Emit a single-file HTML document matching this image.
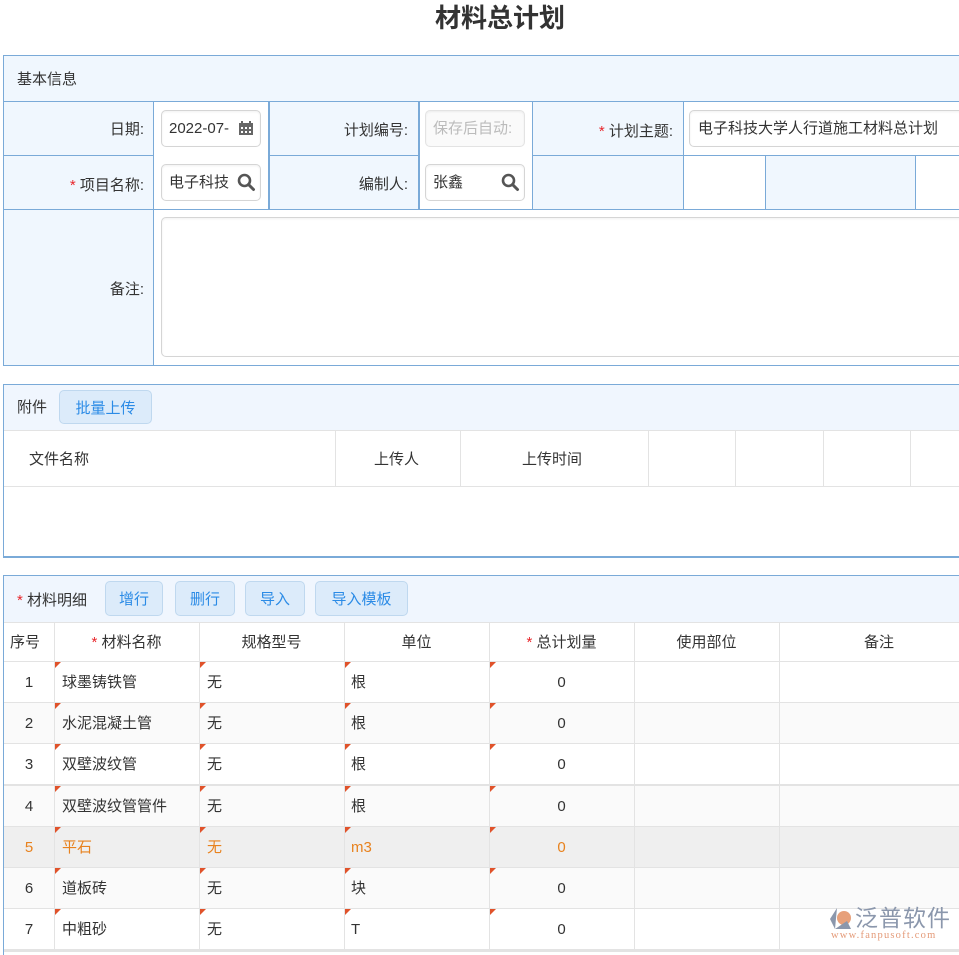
<!DOCTYPE html>
<html><head><meta charset="utf-8"><style>
*{box-sizing:border-box;margin:0;padding:0}
body{width:959px;height:952px;overflow:hidden;background:#fff;position:relative;font-family:"Liberation Sans","Noto Sans CJK SC",sans-serif;font-size:15px;color:#333}
.a{position:absolute}
.lb{position:absolute;background:#f0f7fe}
.vl{position:absolute;width:1px;background:#7aaad8}
.hl{position:absolute;height:1px;background:#7aaad8}
.t{position:absolute;white-space:nowrap;line-height:20px}
.r{text-align:right}
.star{color:#e8262b}
.inp{position:absolute;border:1px solid #d5d5d5;border-radius:5px;background:#fff;box-shadow:inset 0 1px 2px rgba(0,0,0,.06)}
.btn{position:absolute;background:#dcebfa;border:1px solid #bfd8ef;border-radius:5px;color:#2b8be6;text-align:center;line-height:35px;font-size:15px}
.gl{position:absolute;background:#e3e3e3}
.tri{position:absolute;width:0;height:0;border-top:6px solid #e0522a;border-right:6px solid transparent}
.rw .t{top:11px}
</style></head><body>
<div class="t" style="left:0;width:1000px;text-align:center;top:3px;font-size:26px;line-height:30px;font-weight:bold;color:#333">材料总计划</div>

<div class="lb" style="left:3px;top:55px;width:956px;height:310px"></div>
<div class="a" style="left:3px;top:55px;width:957px;height:311px;border:1px solid #7aaad8;border-right:none"></div>
<div class="t" style="left:17px;top:70px">基本信息</div>
<div class="hl" style="left:3px;top:101px;width:956px"></div>
<div class="hl" style="left:3px;top:155px;width:956px"></div>
<div class="hl" style="left:3px;top:209px;width:956px"></div>
<div class="a" style="left:154px;top:102px;width:114px;height:107px;background:#fff"></div>
<div class="a" style="left:419px;top:102px;width:113px;height:107px;background:#fff"></div>
<div class="a" style="left:684px;top:102px;width:275px;height:53px;background:#fff"></div>
<div class="a" style="left:684px;top:156px;width:81px;height:53px;background:#fff"></div>
<div class="a" style="left:916px;top:156px;width:43px;height:53px;background:#fff"></div>
<div class="a" style="left:154px;top:210px;width:805px;height:155px;background:#fff"></div>
<div class="vl" style="left:153px;top:101px;height:264px"></div>
<div class="vl" style="left:268px;top:101px;height:108px;width:2px"></div>
<div class="vl" style="left:418px;top:101px;height:108px;width:2px"></div>
<div class="vl" style="left:532px;top:101px;height:108px"></div>
<div class="vl" style="left:683px;top:101px;height:108px"></div>
<div class="vl" style="left:765px;top:155px;height:54px"></div>
<div class="vl" style="left:915px;top:155px;height:54px"></div>

<div class="t r" style="left:20px;width:124px;top:120px">日期:</div>
<div class="inp" style="left:161px;top:110px;width:100px;height:37px"></div>
<div class="t" style="left:169px;top:119px">2022-07-</div>
<svg class="a" style="left:238px;top:120px" width="16" height="16" viewBox="0 0 16 16"><rect x="1" y="3" width="14" height="12" fill="#666"/><rect x="3" y="1" width="2" height="4" fill="#666"/><rect x="11" y="1" width="2" height="4" fill="#666"/><g fill="#fff"><rect x="3" y="7" width="2" height="2"/><rect x="7" y="7" width="2" height="2"/><rect x="11" y="7" width="2" height="2"/><rect x="3" y="11" width="2" height="2"/><rect x="7" y="11" width="2" height="2"/><rect x="11" y="11" width="2" height="2"/></g></svg>
<div class="t r" style="left:280px;width:128px;top:121px">计划编号:</div>
<div class="inp" style="left:425px;top:110px;width:100px;height:37px;background:#fafafa;border-color:#e3e3e3"></div>
<div class="t" style="left:433px;top:119px;color:#bbb;width:88px;overflow:hidden">保存后自动:</div>
<div class="t r" style="left:540px;width:133px;top:122px"><span class="star">*</span> 计划主题:</div>
<div class="inp" style="left:689px;top:110px;width:280px;height:37px"></div>
<div class="t" style="left:698px;top:119px">电子科技大学人行道施工材料总计划</div>

<div class="t r" style="left:20px;width:124px;top:176px"><span class="star">*</span> 项目名称:</div>
<div class="inp" style="left:161px;top:164px;width:100px;height:37px"></div>
<div class="t" style="left:169px;top:173px">电子科技</div>
<svg class="a" style="left:237px;top:173px" width="19" height="19" viewBox="0 0 19 19"><circle cx="7.5" cy="7.5" r="5.5" fill="none" stroke="#555" stroke-width="2.6"/><line x1="11.5" y1="11.5" x2="16.5" y2="16.5" stroke="#555" stroke-width="3" stroke-linecap="round"/></svg>
<div class="t r" style="left:280px;width:128px;top:175px">编制人:</div>
<div class="inp" style="left:425px;top:164px;width:100px;height:37px"></div>
<div class="t" style="left:433px;top:173px">张鑫</div>
<svg class="a" style="left:501px;top:173px" width="19" height="19" viewBox="0 0 19 19"><circle cx="7.5" cy="7.5" r="5.5" fill="none" stroke="#555" stroke-width="2.6"/><line x1="11.5" y1="11.5" x2="16.5" y2="16.5" stroke="#555" stroke-width="3" stroke-linecap="round"/></svg>

<div class="t r" style="left:20px;width:124px;top:280px">备注:</div>
<div class="inp" style="left:161px;top:217px;width:810px;height:140px"></div>

<div class="a" style="left:3px;top:384px;width:957px;height:174px;border:1px solid #7aaad8;border-bottom:2px solid #7aaad8;border-right:none"></div>
<div class="a" style="left:4px;top:385px;width:955px;height:45px;background:#f0f6fe"></div>
<div class="t" style="left:17px;top:398px">附件</div>
<div class="btn" style="left:59px;top:390px;width:93px;height:34px">批量上传</div>
<div class="gl" style="left:4px;top:430px;width:955px;height:1px"></div>
<div class="gl" style="left:4px;top:486px;width:955px;height:1px"></div>
<div class="gl" style="left:335px;top:431px;width:1px;height:55px"></div>
<div class="gl" style="left:460px;top:431px;width:1px;height:55px"></div>
<div class="gl" style="left:648px;top:431px;width:1px;height:55px"></div>
<div class="gl" style="left:735px;top:431px;width:1px;height:55px"></div>
<div class="gl" style="left:823px;top:431px;width:1px;height:55px"></div>
<div class="gl" style="left:910px;top:431px;width:1px;height:55px"></div>
<div class="t" style="left:29px;top:450px">文件名称</div>
<div class="t" style="left:374px;top:450px">上传人</div>
<div class="t" style="left:522px;top:450px">上传时间</div>

<div class="a" style="left:3px;top:575px;width:957px;height:380px;border:1px solid #7aaad8;border-right:none;border-bottom:none"></div>
<div class="a" style="left:4px;top:576px;width:955px;height:46px;background:#f0f6fe"></div>
<div class="t" style="left:17px;top:591px"><span class="star">*</span> 材料明细</div>
<div class="btn" style="left:105px;top:581px;width:58px;height:35px">增行</div>
<div class="btn" style="left:175px;top:581px;width:60px;height:35px">删行</div>
<div class="btn" style="left:245px;top:581px;width:60px;height:35px">导入</div>
<div class="btn" style="left:315px;top:581px;width:93px;height:35px">导入模板</div>
<div class="gl" style="left:4px;top:622px;width:955px;height:1px"></div>

<div class="t" style="left:10px;top:633px">序号</div>
<div class="t" style="left:54px;width:145px;text-align:center;top:633px"><span class="star">*</span> 材料名称</div>
<div class="t" style="left:199px;width:145px;text-align:center;top:633px">规格型号</div>
<div class="t" style="left:344px;width:145px;text-align:center;top:633px">单位</div>
<div class="t" style="left:489px;width:145px;text-align:center;top:633px"><span class="star">*</span> 总计划量</div>
<div class="t" style="left:634px;width:145px;text-align:center;top:633px">使用部位</div>
<div class="t" style="left:779px;width:200px;text-align:center;top:633px">备注</div>

<div class="a" style="left:4px;top:702px;width:955px;height:41px;background:#fafafa"></div>
<div class="a" style="left:4px;top:786px;width:955px;height:41px;background:#fafafa"></div>
<div class="a" style="left:4px;top:827px;width:955px;height:41px;background:#efefef"></div>
<div class="a" style="left:4px;top:868px;width:955px;height:41px;background:#fafafa"></div>
<div class="gl" style="left:4px;top:661px;width:955px;height:1px"></div>
<div class="gl" style="left:4px;top:702px;width:955px;height:1px"></div>
<div class="gl" style="left:4px;top:743px;width:955px;height:1px"></div>
<div class="gl" style="left:4px;top:784px;width:955px;height:2px"></div>
<div class="gl" style="left:4px;top:826px;width:955px;height:1px"></div>
<div class="gl" style="left:4px;top:867px;width:955px;height:1px"></div>
<div class="gl" style="left:4px;top:908px;width:955px;height:1px"></div>
<div class="gl" style="left:4px;top:949px;width:955px;height:3px"></div>
<div class="gl" style="left:54px;top:622px;width:1px;height:330px"></div>
<div class="gl" style="left:199px;top:622px;width:1px;height:330px"></div>
<div class="gl" style="left:344px;top:622px;width:1px;height:330px"></div>
<div class="gl" style="left:489px;top:622px;width:1px;height:330px"></div>
<div class="gl" style="left:634px;top:622px;width:1px;height:330px"></div>
<div class="gl" style="left:779px;top:622px;width:1px;height:330px"></div>

<div class="a rw" style="left:0;top:662px">
 <div class="t" style="left:4px;width:50px;text-align:center">1</div><div class="t" style="left:62px">球墨铸铁管</div><div class="t" style="left:207px">无</div><div class="t" style="left:351px">根</div><div class="t" style="left:489px;width:145px;text-align:center">0</div>
 <div class="tri" style="left:55px;top:0"></div><div class="tri" style="left:200px;top:0"></div><div class="tri" style="left:345px;top:0"></div><div class="tri" style="left:490px;top:0"></div>
</div>
<div class="a rw" style="left:0;top:703px">
 <div class="t" style="left:4px;width:50px;text-align:center">2</div><div class="t" style="left:62px">水泥混凝土管</div><div class="t" style="left:207px">无</div><div class="t" style="left:351px">根</div><div class="t" style="left:489px;width:145px;text-align:center">0</div>
 <div class="tri" style="left:55px;top:0"></div><div class="tri" style="left:200px;top:0"></div><div class="tri" style="left:345px;top:0"></div><div class="tri" style="left:490px;top:0"></div>
</div>
<div class="a rw" style="left:0;top:744px">
 <div class="t" style="left:4px;width:50px;text-align:center">3</div><div class="t" style="left:62px">双壁波纹管</div><div class="t" style="left:207px">无</div><div class="t" style="left:351px">根</div><div class="t" style="left:489px;width:145px;text-align:center">0</div>
 <div class="tri" style="left:55px;top:0"></div><div class="tri" style="left:200px;top:0"></div><div class="tri" style="left:345px;top:0"></div><div class="tri" style="left:490px;top:0"></div>
</div>
<div class="a rw" style="left:0;top:786px">
 <div class="t" style="left:4px;width:50px;text-align:center">4</div><div class="t" style="left:62px">双壁波纹管管件</div><div class="t" style="left:207px">无</div><div class="t" style="left:351px">根</div><div class="t" style="left:489px;width:145px;text-align:center">0</div>
 <div class="tri" style="left:55px;top:0"></div><div class="tri" style="left:200px;top:0"></div><div class="tri" style="left:345px;top:0"></div><div class="tri" style="left:490px;top:0"></div>
</div>
<div class="a rw" style="left:0;top:827px;color:#e8821e">
 <div class="t" style="left:4px;width:50px;text-align:center">5</div><div class="t" style="left:62px">平石</div><div class="t" style="left:207px">无</div><div class="t" style="left:351px">m3</div><div class="t" style="left:489px;width:145px;text-align:center">0</div>
 <div class="tri" style="left:55px;top:0"></div><div class="tri" style="left:200px;top:0"></div><div class="tri" style="left:345px;top:0"></div><div class="tri" style="left:490px;top:0"></div>
</div>
<div class="a rw" style="left:0;top:868px">
 <div class="t" style="left:4px;width:50px;text-align:center">6</div><div class="t" style="left:62px">道板砖</div><div class="t" style="left:207px">无</div><div class="t" style="left:351px">块</div><div class="t" style="left:489px;width:145px;text-align:center">0</div>
 <div class="tri" style="left:55px;top:0"></div><div class="tri" style="left:200px;top:0"></div><div class="tri" style="left:345px;top:0"></div><div class="tri" style="left:490px;top:0"></div>
</div>
<div class="a rw" style="left:0;top:909px">
 <div class="t" style="left:4px;width:50px;text-align:center">7</div><div class="t" style="left:62px">中粗砂</div><div class="t" style="left:207px">无</div><div class="t" style="left:351px">T</div><div class="t" style="left:489px;width:145px;text-align:center">0</div>
 <div class="tri" style="left:55px;top:0"></div><div class="tri" style="left:200px;top:0"></div><div class="tri" style="left:345px;top:0"></div><div class="tri" style="left:490px;top:0"></div>
</div>

<svg class="a" style="left:829px;top:907px" width="26" height="24" viewBox="0 0 26 24"><path d="M8 1 L1 12 L6 22 Z" fill="#8b97ac"/><circle cx="15" cy="11" r="7" fill="#e7a07a"/><path d="M6 22 L22 22 L18 14 Z" fill="#8b97ac"/></svg>
<div class="t" style="left:855px;top:904px;font-size:23px;line-height:28px;color:#8b97ac;letter-spacing:1px">泛普软件</div>
<div class="t" style="left:831px;top:930px;font-size:10.5px;line-height:12px;color:#e49a78;font-family:'Liberation Serif',serif;letter-spacing:1.2px">www.fanpusoft.com</div>
</body></html>
